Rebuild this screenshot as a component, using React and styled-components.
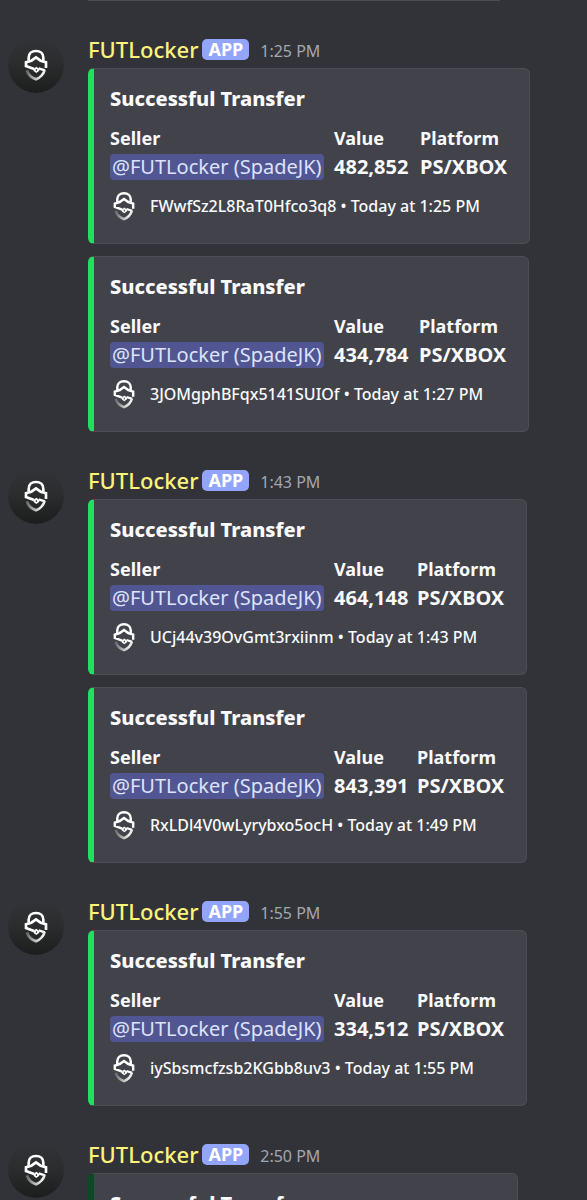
import React from 'react'
import styled, { createGlobalStyle } from 'styled-components'


const GlobalStyle = createGlobalStyle`
    * {
        box-sizing: border-box;
    }
    body {
        margin: 0;
        background: #313338;
        font-family: 'Noto Sans', 'Open Sans', sans-serif;
    }
    #root {
        height: 100vh;
        overflow: hidden;
    }
`

const messages = [
    {
        time: '1:25 PM',
        embeds: [
            { value: '482,852', id: 'FWwfSz2L8RaT0Hfco3q8', valueWidth: 86 },
            { value: '434,784', id: '3JOMgphBFqx5141SUIOf', time: '1:27 PM', valueWidth: 85 },
        ],
    },
    {
        time: '1:43 PM',
        embeds: [
            { value: '464,148', id: 'UCj44v39OvGmt3rxiinm', valueWidth: 83 },
            { value: '843,391', id: 'RxLDl4V0wLyrybxo5ocH', time: '1:49 PM', valueWidth: 83 },
        ],
    },
    {
        time: '1:55 PM',
        embeds: [
            { value: '334,512', id: 'iySbsmcfzsb2KGbb8uv3', valueWidth: 83 },
        ],
    },
    {
        time: '2:50 PM',
        embeds: [
            { id: 'latest', valueWidth: 74, accent: '#0b4a24' },
        ],
    },
]

function Logo({ width, height, id }) {
    return (
        <svg width={width} height={height} viewBox="72 57 72 96" fill="none" aria-hidden="true">
            <defs>
                <linearGradient id={id} x1="82" y1="130" x2="124" y2="138" gradientUnits="userSpaceOnUse">
                    <stop offset="0" stopColor="#707070" />
                    <stop offset="1" stopColor="#ececec" />
                </linearGradient>
            </defs>
            <path d="M86 92V83c0-12 9-20 22-20s22 8 22 20v9" stroke="#fff" strokeWidth="8" />
            <path d="M102 117L78 108V97L94 92L108 82L122 92L138 97V114" stroke="#fff" strokeWidth="8" />
            <path d="M100 117l9-7 9 7v5l-9 7-8-6z" fill="#fff" />
            <path d="M109 117v6" stroke="#3a3a3c" strokeWidth="3" />
            <path d="M116 115l19 6" stroke="#fff" strokeWidth="7" />
            <path d="M81 121c3 13 12 21 27 27 14-6 22-14 26-28" stroke={`url(#${id})`} strokeWidth="8" />
        </svg>
    )
}

function Embed({ value, id, time, valueWidth, accent }) {
    return (
        <Card $accent={accent}>
            <Title>Successful Transfer</Title>
            <Fields $valueWidth={valueWidth}>
                {value && (
                    <>
                        <Field>
                            <FieldName>Seller</FieldName>
                            <Mention>@FUTLocker (SpadeJK)</Mention>
                        </Field>
                        <Field>
                            <FieldName>Value</FieldName>
                            <FieldValue>{value}</FieldValue>
                        </Field>
                        <Field>
                            <FieldName>Platform</FieldName>
                            <FieldValue>PS/XBOX</FieldValue>
                        </Field>
                    </>
                )}
            </Fields>
            {value && (
                <Footer>
                    <Logo width={22} height={30} id={`footer-${id}`} />
                    <span>{id} • Today at {time}</span>
                </Footer>
            )}
        </Card>
    )
}

function Message({ time, embeds }) {
    return (
        <Row>
            <Avatar>
                <Logo width={24} height={32} id={`avatar-${embeds[0].id}`} />
            </Avatar>
            <Content>
                <Header>
                    <Name>FUTLocker</Name>
                    <Badge>APP</Badge>
                    <Time>{time}</Time>
                </Header>
                <Embeds>
                    {embeds.map((embed) => (
                        <Embed key={embed.id} time={time} {...embed} />
                    ))}
                </Embeds>
            </Content>
        </Row>
    )
}

function App() {
    return (
        <Chat>
            <GlobalStyle />
            <PreviousEmbed />
            {messages.map((message) => (
                <Message key={message.time} {...message} />
            ))}
        </Chat>
    )
}

export default App


const Chat = styled.main`
    display: flex;
    flex-direction: column;
    gap: 36px;
`

const PreviousEmbed = styled.div`
    width: 412px;
    height: 1px;
    margin-left: 88px;
    background: #4b4c53;
`

const Row = styled.article`
    display: flex;
    gap: 24px;
    padding-left: 8px;
`

const Avatar = styled.div`
    display: flex;
    flex-shrink: 0;
    justify-content: center;
    align-items: center;
    width: 56px;
    height: 56px;
    border-radius: 50%;
    background: linear-gradient(#313338, #2b2d2e 45%, #1c1e1e);
`

const Content = styled.div`
    min-width: 0;
`

const Header = styled.header`
    display: flex;
    align-items: center;
    height: 24px;
    margin-bottom: 7px;
`

const Name = styled.span`
    color: #fdf37a;
    font-size: 22px;
    font-weight: 500;
    line-height: 24px;
`

const Badge = styled.span`
    height: 21px;
    margin: 0 11px 0 4px;
    padding: 0 6px;
    border-radius: 5px;
    background: #92a5fb;
    color: #fff;
    font-size: 18px;
    font-weight: 700;
    line-height: 21px;
`

const Time = styled.time`
    padding-top: 4px;
    color: #a3a7b0;
    font-size: 16px;
    line-height: 20px;
`

const Embeds = styled.div`
    display: flex;
    flex-direction: column;
    align-items: flex-start;
    gap: 12px;
`

const Card = styled.section`
    height: 176px;
    padding: 18px 23px 0 16px;
    border: 1px solid #4e4f56;
    border-left: 6px solid ${(props) => props.$accent || '#1fdf64'};
    border-radius: 6px;
    background: #42434a;
    color: #fafafc;
`

const Title = styled.h2`
    margin: 0 0 14px;
    font-size: 20px;
    font-weight: 800;
    line-height: 24px;
`

const Fields = styled.div`
    display: grid;
    grid-template-columns: 224px ${(props) => props.$valueWidth}px 86px;
`

const Field = styled.div`
    display: flex;
    flex-direction: column;
    align-items: flex-start;
    gap: 3px;
`

const FieldName = styled.div`
    font-size: 18px;
    font-weight: 700;
    line-height: 26px;
`

const FieldValue = styled.div`
    font-size: 20px;
    font-weight: 700;
    line-height: 26px;
`

const Mention = styled.span`
    padding: 0 2px;
    border-radius: 4px;
    background: #515693;
    color: #dde3fb;
    font-size: 20px;
    line-height: 26px;
    white-space: nowrap;
`

const Footer = styled.footer`
    display: flex;
    align-items: center;
    gap: 15px;
    margin-top: 11px;
    padding-left: 3px;
    font-size: 16px;
    font-weight: 500;
    line-height: 28px;
    white-space: nowrap;
`
